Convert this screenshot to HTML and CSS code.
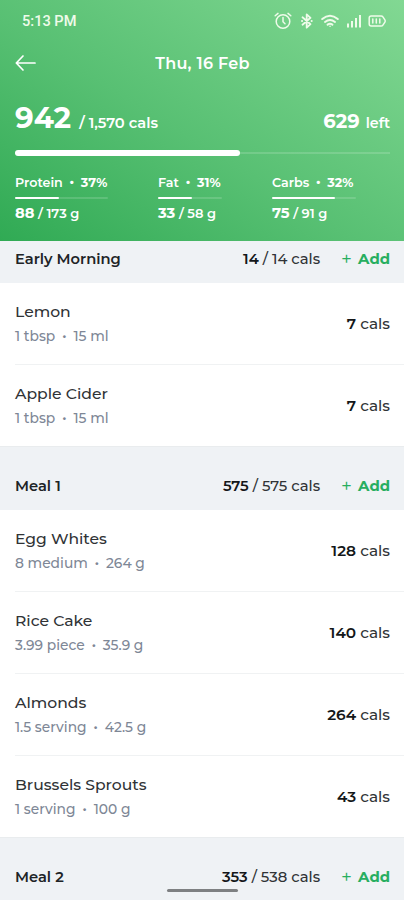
FILE: index.html
```
<!DOCTYPE html>
<html lang="en">
<head>
<meta charset="utf-8">
<title>Food diary</title>
<link rel="stylesheet" href="styles.css">
</head>
<body>
<div class="screen">
  <header class="summary">
    <div class="status">
      <span class="clock">5:13 PM</span>
      <svg class="status-icons" width="114" height="20" viewBox="0 0 114 20" fill="none" stroke="currentColor" stroke-width="1.5" stroke-linecap="round" stroke-linejoin="round">
        <circle cx="9" cy="10.5" r="6.8"/><path d="M9 6.5v4.3l2 2M1.2 4.8 4 2.4M16.8 4.8 14 2.4"/>
        <path stroke-width="1.8" d="M28.5 6.3 36.5 13.2 32.7 16.7V3.3L36.5 6.8 28.5 13.7"/><path stroke-width="2" d="M28 10h.1M37.6 10h.1"/>
        <path stroke-width="2" d="M48.2 8Q56 1.5 63.8 8M51 11Q56 7 61 11M53.6 13.6Q56 12 58.4 13.6"/><path d="M56 15.3h.1"/>
        <path stroke-width="2" stroke-linecap="butt" d="M74 16.5v-4M78 16.5V10M82 16.5V7M86 16.5V4"/>
        <path d="M97.2 5h10q1.1 0 1.7.9l2 3q.7 1.1 0 2.2l-2 3q-.6.9-1.7.9h-10q-2 0-2-2V7q0-2 2-2zM98.8 8v4M102.3 8v4M105.8 8v4"/>
      </svg>
    </div>
    <div class="nav">
      <svg class="back" width="22" height="18" viewBox="0 0 22 18" fill="none" stroke="currentColor" stroke-width="1.7" stroke-linecap="round" stroke-linejoin="round"><path d="M20 9H1.5M8 2 1.3 9 8 16"/></svg>
      <h1>Thu, 16 Feb</h1>
    </div>
    <div class="totals">
      <div><b class="eaten">942</b><span class="goal">/ 1,570 cals</span></div>
      <div><b class="left">629</b><span class="left-label">left</span></div>
    </div>
    <div class="bar"><div class="fill"></div></div>
    <div class="macros">
      <div class="macro protein"><div class="label">Protein <i>•</i> <b>37%</b></div><div class="mini"><div></div></div><div class="value"><b>88</b> / 173 g</div></div>
      <div class="macro fat"><div class="label">Fat <i>•</i> <b>31%</b></div><div class="mini"><div></div></div><div class="value"><b>33</b> / 58 g</div></div>
      <div class="macro carbs"><div class="label">Carbs <i>•</i> <b>32%</b></div><div class="mini"><div></div></div><div class="value"><b>75</b> / 91 g</div></div>
    </div>
  </header>
  <main>
    <div class="meal first"><h2>Early Morning</h2><span class="sum"><b>14</b> / 14 cals</span><span class="add"><i>+</i>Add</span></div>
    <div class="food"><div><div class="name">Lemon</div><div class="qty">1 tbsp <i>•</i> 15 ml</div></div><span class="cals"><b>7</b> cals</span></div>
    <div class="food"><div><div class="name">Apple Cider</div><div class="qty">1 tbsp <i>•</i> 15 ml</div></div><span class="cals"><b>7</b> cals</span></div>
    <div class="meal"><h2>Meal 1</h2><span class="sum"><b>575</b> / 575 cals</span><span class="add"><i>+</i>Add</span></div>
    <div class="food"><div><div class="name">Egg Whites</div><div class="qty">8 medium <i>•</i> 264 g</div></div><span class="cals"><b>128</b> cals</span></div>
    <div class="food"><div><div class="name">Rice Cake</div><div class="qty">3.99 piece <i>•</i> 35.9 g</div></div><span class="cals"><b>140</b> cals</span></div>
    <div class="food"><div><div class="name">Almonds</div><div class="qty">1.5 serving <i>•</i> 42.5 g</div></div><span class="cals"><b>264</b> cals</span></div>
    <div class="food"><div><div class="name">Brussels Sprouts</div><div class="qty">1 serving <i>•</i> 100 g</div></div><span class="cals"><b>43</b> cals</span></div>
    <div class="meal"><h2>Meal 2</h2><span class="sum"><b>353</b> / 538 cals</span><span class="add"><i>+</i>Add</span></div>
  </main>
  <div class="handle"></div>
</div>
</body>
</html>
```
FILE: styles.css
```
* { box-sizing: border-box; }
body { margin: 0; font-family: Montserrat, Inter, sans-serif; font-weight: 500; color: #303336; }
i { font-style: normal; }
h1, h2 { margin: 0; }
b { font-weight: 700; }
.screen { position: relative; width: 404px; height: 900px; overflow: hidden; background: #fff; }

.summary {
  position: relative; z-index: 1; height: 241px; padding: 0 14px 0 15px; color: #fff;
  background: linear-gradient(32deg, #30aa54 0%, #58c073 45%, #82d893 100%);
}
.status { display: flex; justify-content: space-between; align-items: center; height: 42px; padding-left: 7px; }
.clock { font: 500 14.6px Roboto, sans-serif; color: #effbea; }
.status-icons { color: #effbea; margin-right: 2px; }
.nav { display: grid; grid-template-columns: 24px 1fr 24px; align-items: center; height: 42px; }
.nav h1 { font-size: 16px; font-weight: 600; text-align: center; letter-spacing: .3px; }
.totals { display: flex; justify-content: space-between; align-items: baseline; height: 66px; line-height: 68px; white-space: nowrap; }
.eaten { font-size: 29.3px; margin-right: 8px; }
.goal { font-size: 14.7px; font-weight: 600; }
.left { font-size: 19.5px; margin-right: 6px; }
.left-label { font-size: 14.3px; font-weight: 600; }
.bar { display: flex; align-items: center; height: 6px; background: linear-gradient(#ffffff26, #ffffff26) center / 100% 2px no-repeat; }
.fill { width: 60%; height: 6px; border-radius: 3px; background: #fff; }
.macros { display: grid; grid-template-columns: 143px 114px 1fr; margin-top: 19px; font-size: 12.7px; font-weight: 600; white-space: nowrap; }
.label { height: 16px; line-height: 16px; }
.label i { margin: 0 3px; }
.label i, .qty i { display: inline-block; font-size: 15px; line-height: 10px; }
.mini { height: 2px; margin-top: 6px; background: #ffffff26; border-radius: 1px; }
.mini div { height: 2px; background: #fff; border-radius: 1px; }
.value { height: 20px; line-height: 20px; margin-top: 4px; font-size: 13px; }
.value b { font-size: 14.7px; }
.protein .mini { width: 93px; } .protein .mini div { width: 44px; }
.fat .mini { width: 64px; } .fat .mini div { width: 34px; }
.carbs .mini { width: 84px; } .carbs .mini div { width: 63px; }

.meal { display: flex; align-items: center; height: 64px; padding: 15px 14px 0 15px; background: #eff2f5; border-top: 1px solid #e9ecee; }
.meal.first { margin-top: -22px; }
.meal h2 { flex: 1; font-size: 14.7px; font-weight: 600; color: #202326; }
.sum, .cals { font-size: 14.8px; white-space: nowrap; }
.cals { font-size: 15.3px; }
.sum b, .cals b { font-weight: 600; color: #141719; }
.add { display: flex; align-items: center; margin-left: 21px; font-size: 14.9px; font-weight: 700; color: #27ae60; }
.add i { margin-right: 6px; font-size: 19px; line-height: 18px; font-weight: 400; }
.food { display: flex; justify-content: space-between; align-items: center; height: 82px; margin-left: 15px; padding-right: 14px; border-bottom: 1px solid #f0f2f3; }
.food:has(+ .meal) { height: 81px; border-bottom: 0; }
.name { padding-top: 1px; font-size: 15.6px; line-height: 24px; }
.qty { font-size: 13.8px; line-height: 24px; color: #7e8796; }
.qty i { margin: 0 3px; }
.handle { position: absolute; left: 167px; top: 889px; width: 71px; height: 3px; border-radius: 2px; background: #7e8082; }
```
